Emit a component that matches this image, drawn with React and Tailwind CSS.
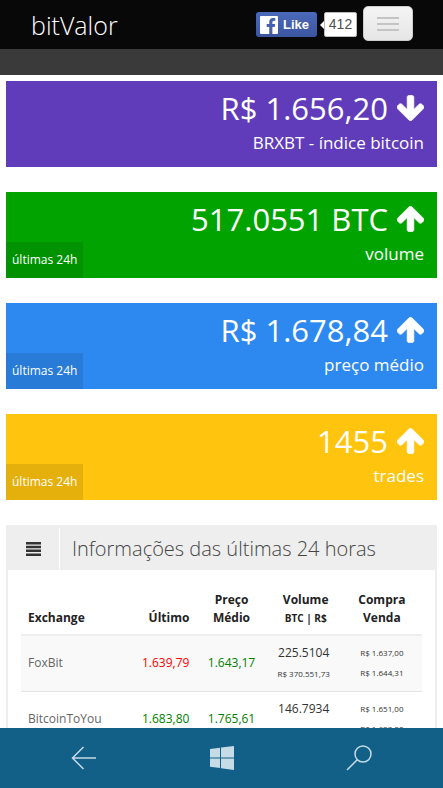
import { FaFacebookF } from "react-icons/fa";

const stats = [
  { value: "R$ 1.656,20", label: "BRXBT - índice bitcoin", color: "bg-[#603cba]", down: true },
  { value: "517.0551 BTC", label: "volume", color: "bg-[#00a300]", badge: "últimas 24h" },
  { value: "R$ 1.678,84", label: "preço médio", color: "bg-[#2d89ef]", badge: "últimas 24h" },
  { value: "1455", label: "trades", color: "bg-[#ffc40d]", badge: "últimas 24h" },
];

const exchanges = [
  {
    name: "FoxBit",
    last: "1.639,79",
    lastColor: "text-[#ff0000]",
    average: "1.643,17",
    btc: "225.5104",
    brl: "R$ 370.551,73",
    buy: "R$ 1.637,00",
    sell: "R$ 1.644,31",
  },
  {
    name: "BitcoinToYou",
    last: "1.683,80",
    lastColor: "text-[#008000]",
    average: "1.765,61",
    btc: "146.7934",
    brl: "R$ 259.180,21",
    buy: "R$ 1.651,00",
    sell: "R$ 1.683,80",
  },
];

const Arrow = ({ down }) => (
  <svg
    className={down ? "h-[26px] w-[27px] rotate-180" : "h-[26px] w-[27px]"}
    viewBox="53 192 1558 1472"
    fill="currentColor"
    stroke="currentColor"
    strokeWidth="40"
    aria-hidden="true"
  >
    <path d="M1611 971q0 51-37 90l-75 75q-38 38-91 38-54 0-90-38l-294-293v704q0 52-37.500 84.500t-90.500 32.500h-128q-53 0-90.500-32.500t-37.500-84.500v-704l-294 293q-36 38-90 38t-90-38l-75-75q-38-38-38-90 0-53 38-91l651-651q35-37 90-37 54 0 91 37l651 651q37 39 37 91z" />
  </svg>
);

const StatCard = ({ stat }) => (
  <section className={`relative h-[86px] pt-2 pr-[13px] pl-3 text-right text-white ${stat.color}`}>
    <div className="flex items-center justify-end gap-[9px] text-[31px] leading-[38px]">
      <span>{stat.value}</span>
      <Arrow down={stat.down} />
    </div>
    <p className="text-[17px] leading-8">{stat.label}</p>
    {stat.badge && (
      <span className="absolute bottom-0 left-0 bg-black/10 px-[6px] py-2 text-[12px] leading-5">
        {stat.badge}
      </span>
    )}
  </section>
);

const Header = () => (
  <header>
    <div className="flex h-[49px] items-center justify-between bg-[#080808] pr-[30px] pl-[31px]">
      <a href="#" className="text-[25px] leading-8 font-light text-white">
        bitValor
      </a>
      <div className="flex items-center">
        <button className="flex h-[25px] w-[61px] items-center gap-[5px] rounded-[3px] bg-linear-to-b from-[#4c69ba] to-[#3b55a0] pl-1 font-['Liberation_Sans',sans-serif] text-[13px] font-bold text-white">
          <span className="flex h-[18px] w-[18px] items-end justify-end rounded-[1px] bg-white pr-[2px]">
            <FaFacebookF className="h-4 w-[10px] text-[#4560ad]" />
          </span>
          Like
        </button>
        <svg className="ml-[3px] h-2 w-1" viewBox="0 0 4 8" fill="#fff" aria-hidden="true">
          <path d="M4 0v8L0 4z" />
        </svg>
        <span className="flex h-[25px] w-[33px] items-center justify-center rounded-[2px] border border-[#bbb] bg-white font-['Liberation_Sans',sans-serif] text-[14px] text-[#4b4f56]">
          412
        </span>
        <button
          aria-label="Menu"
          className="mb-[3px] ml-[6px] flex h-[35px] w-[50px] flex-col items-center justify-center gap-1 rounded-[5px] border border-[#ccc] bg-linear-to-b from-[#f4f4f4] to-[#e6e6e6] pt-[2px]"
        >
          <span className="h-[2px] w-[22px] bg-[#c4c4c4]" />
          <span className="h-[2px] w-[22px] bg-[#c4c4c4]" />
          <span className="h-[2px] w-[22px] bg-[#c4c4c4]" />
        </button>
      </div>
    </div>
    <div className="h-[26px] bg-[#3a3a3a]" />
  </header>
);

const ExchangeTable = () => (
  <section className="border-x-2 border-[#eeeeee] bg-white">
    <div className="flex h-[45px] bg-[#eeeeee]">
      <span className="mt-[3px] flex w-[52px] items-center justify-center border-r border-white">
        <svg className="h-[14px] w-[15px]" viewBox="0 0 15 14" fill="#333" aria-hidden="true">
          <path d="M0 0h15v2.500H0zM0 3.800h15v2.500H0zM0 7.600h15v2.500H0zM0 11.400h15v2.500H0z" />
        </svg>
      </span>
      <h2 className="pl-3 text-[20px] leading-[48px] font-light whitespace-nowrap text-[#444]">
        Informações das últimas 24 horas
      </h2>
    </div>
    <div className="px-[13px] pt-4">
      <table className="w-full table-fixed text-[12px] leading-[18px] text-[#333]">
        <thead>
          <tr className="h-[49px] border-b-2 border-[#eeeeee] align-bottom text-[12px] text-[#222]">
            <th className="w-[26%] pb-[7px] pl-[7px] text-left">Exchange</th>
            <th className="w-[17%] pb-[7px] pr-1 text-right">Último</th>
            <th className="w-[19%] pb-[7px]">
              Preço
              <br />
              Médio
            </th>
            <th className="w-[18%] pb-[7px]">
              Volume
              <br />
              <span className="text-[10px]">BTC | R$</span>
            </th>
            <th className="w-[20%] pb-[7px]">
              Compra
              <br />
              Venda
            </th>
          </tr>
        </thead>
        <tbody>
          {exchanges.map((row) => (
            <tr
              key={row.name}
              className="h-14 border-b border-[#e5e5e5] whitespace-nowrap odd:bg-[#f9f9f9]"
            >
              <td className="pl-[7px] text-[#666]">{row.name}</td>
              <td className={`pr-1 text-right ${row.lastColor}`}>{row.last}</td>
              <td className="text-center text-[#008000]">{row.average}</td>
              <td className="pr-1 text-center leading-5">
                {row.btc}
                <br />
                <span className="text-[8px]">{row.brl}</span>
              </td>
              <td className="text-center text-[8px] leading-5">
                {row.buy}
                <br />
                {row.sell}
              </td>
            </tr>
          ))}
        </tbody>
      </table>
    </div>
  </section>
);

const PhoneBar = () => (
  <nav className="flex h-[60px] shrink-0 items-center justify-between bg-[#125f87] px-[70px] text-[#c5dbe6]">
    <button aria-label="Back">
      <svg className="h-7 w-7" viewBox="0 0 28 28" fill="none" stroke="currentColor" strokeWidth="1.5">
        <path d="M26 14H2.500M13.500 3L2.500 14l11 11" />
      </svg>
    </button>
    <button aria-label="Start">
      <svg className="h-6 w-6" viewBox="0 0 24 24" fill="currentColor">
        <path d="M0 3l10-1.300v9.700H0zM11 1.500L24 0v11.400H11zM0 12.500h10v9.600L0 20.800zM11 12.500h13V24l-13-1.700z" />
      </svg>
    </button>
    <button aria-label="Search">
      <svg className="h-7 w-7" viewBox="0 0 28 28" fill="none" stroke="currentColor" strokeWidth="1.5">
        <circle cx="18" cy="10" r="8" />
        <path d="M12.500 15.500L2 26" />
      </svg>
    </button>
  </nav>
);

const App = () => {
  return (
    <div className="flex h-dvh flex-col bg-white font-['Open_Sans',sans-serif]">
      <div className="min-h-0 flex-1 overflow-y-auto [scrollbar-width:none]">
        <Header />
        <main className="flex flex-col gap-[25px] px-[6px] pt-[6px]">
          {stats.map((stat) => (
            <StatCard key={stat.label} stat={stat} />
          ))}
          <ExchangeTable />
        </main>
      </div>
      <PhoneBar />
    </div>
  );
};

export default App;
